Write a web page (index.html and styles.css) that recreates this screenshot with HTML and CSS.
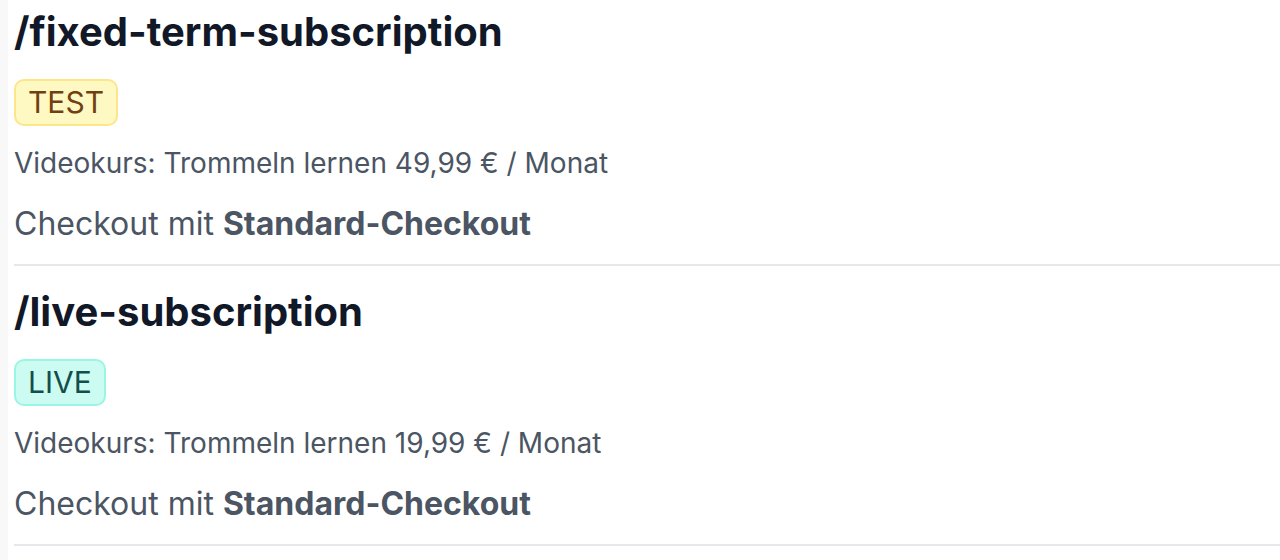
FILE: index.html
```html
<!DOCTYPE html>
<html lang="de">
<head>
<meta charset="utf-8">
<title>Checkouts</title>
<link rel="stylesheet" href="styles.css">
</head>
<body>
<main class="list">
  <section class="item">
    <h2 class="slug">/fixed-term-subscription</h2>
    <span class="badge badge-test">TEST</span>
    <p class="product">Videokurs: Trommeln lernen 49,99 € / Monat</p>
    <p class="checkout">Checkout mit <strong>Standard-Checkout</strong></p>
  </section>
  <section class="item">
    <h2 class="slug">/live-subscription</h2>
    <span class="badge badge-live">LIVE</span>
    <p class="product">Videokurs: Trommeln lernen 19,99 € / Monat</p>
    <p class="checkout">Checkout mit <strong>Standard-Checkout</strong></p>
  </section>
</main>
</body>
</html>
```

FILE: styles.css
```css
html, body {
  margin: 0;
  padding: 0;
  background: #ffffff;
}

body {
  font-family: Inter, "Noto Sans", sans-serif;
  color: #1f2937;
}

.list {
  border-left: 8px solid #f8f8f8;
  padding-left: 6px;
  display: flex;
  flex-direction: column;
}

.item {
  display: flex;
  flex-direction: column;
  align-items: flex-start;
  padding-bottom: 20px;
  margin-bottom: 14px;
  border-bottom: 2px solid #e5e7eb;
}

.slug {
  margin: 4px 0 0 0;
  font-size: 40px;
  line-height: 56px;
  font-weight: 700;
  color: #111827;
}

.badge {
  margin-top: 19px;
  font-size: 30px;
  line-height: 39px;
  padding: 2px 12px;
  border-radius: 10px;
  border: 2px solid;
}

.badge-test {
  background: #fef9c3;
  border-color: #fde68a;
  color: #713f12;
}

.badge-live {
  background: #ccfbf1;
  border-color: #99f6e4;
  color: #134e4a;
}

.product {
  margin: 19px 0 0 0;
  font-size: 28px;
  line-height: 36px;
  color: #4b5563;
}

.checkout {
  margin: 23px 0 0 0;
  font-size: 32px;
  line-height: 40px;
  color: #4b5563;
}

.checkout strong {
  font-weight: 700;
  color: #4b5563;
}
```
